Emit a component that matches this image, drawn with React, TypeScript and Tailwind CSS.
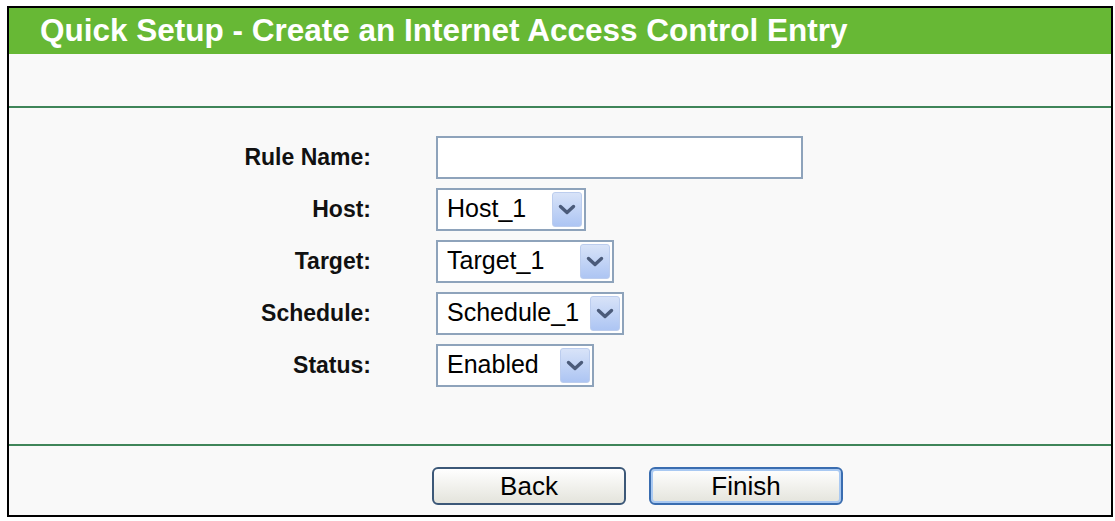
import React from "react";

const font = { fontFamily: '"Liberation Sans", Arial, sans-serif' };

const rows = [
  { label: "Host:", value: "Host_1", width: "w-[150px]" },
  { label: "Target:", value: "Target_1", width: "w-[178px]" },
  { label: "Schedule:", value: "Schedule_1", width: "w-[188px]" },
  { label: "Status:", value: "Enabled", width: "w-[158px]" },
];

const Chevron: React.FC = () => (
  <svg width="18" height="11" viewBox="0 0 18 11" fill="none">
    <path d="M2.5 2.5 L9 8.5 L15.5 2.5" stroke="#4b5b7a" strokeWidth="3.4" strokeLinecap="round" strokeLinejoin="round" />
  </svg>
);

const Select: React.FC<{ value: string; width: string }> = ({ value, width }) => (
  <div className={`relative ${width} h-[43px] border-2 border-[#8ea3bb] bg-white`}>
    <select
      defaultValue={value}
      className="w-full h-full appearance-none bg-transparent pl-[9px] text-[25px] text-black outline-none"
      style={font}
    >
      <option value={value}>{value}</option>
    </select>
    <div className="pointer-events-none absolute right-[2px] top-[2px] bottom-[2px] w-[30px] rounded-[3px] border border-[#bccdee] bg-gradient-to-b from-[#d8e3f8] to-[#adc5f3] flex items-center justify-center">
      <Chevron />
    </div>
  </div>
);

const App: React.FC = () => {
  return (
    <div className="w-[1115px] h-[521px] bg-white pt-[6px] pl-[7px]" style={font}>
      <div className="w-[1106px] h-[511px] border-2 border-black bg-[#f9f9f9] flex flex-col">
        <div className="h-[46px] bg-[#67b835] flex items-center pl-[31px]">
          <h1 className="text-[31.5px] font-bold text-white leading-none">
            Quick Setup - Create an Internet Access Control Entry
          </h1>
        </div>
        <div className="h-[52px]" />
        <div className="h-[2px] bg-[#3f8559]" />
        <div className="h-[336px] pt-[23px]">
          <div className="grid grid-cols-[362px_1fr] gap-x-[65px]">
            <div className="h-[52px] flex items-center justify-end text-[23px] font-bold text-[#111]">
              Rule Name:
            </div>
            <div className="h-[52px] flex items-center">
              <input
                type="text"
                className="w-[367px] h-[43px] border-2 border-[#8ea3bb] bg-white outline-none px-2 text-[24px]"
              />
            </div>
            {rows.map((r) => (
              <React.Fragment key={r.label}>
                <div className="h-[52px] flex items-center justify-end text-[23px] font-bold text-[#111]">
                  {r.label}
                </div>
                <div className="h-[52px] flex items-center">
                  <Select value={r.value} width={r.width} />
                </div>
              </React.Fragment>
            ))}
          </div>
        </div>
        <div className="h-[2px] bg-[#3f8559]" />
        <div className="flex-1 pt-[21px] pl-[423px] flex gap-[23px]">
          <button className="w-[194px] h-[38px] rounded-[6px] border-2 border-[#3c5878] bg-gradient-to-b from-white to-[#e4e4dc] text-[26px] text-black leading-none">
            Back
          </button>
          <button className="w-[194px] h-[38px] rounded-[6px] border-2 border-[#3a6db0] bg-gradient-to-b from-white to-[#e4e4dc] shadow-[inset_0_0_0_2px_#a9c9f2] text-[26px] text-black leading-none">
            Finish
          </button>
        </div>
      </div>
    </div>
  );
};

export default App;
